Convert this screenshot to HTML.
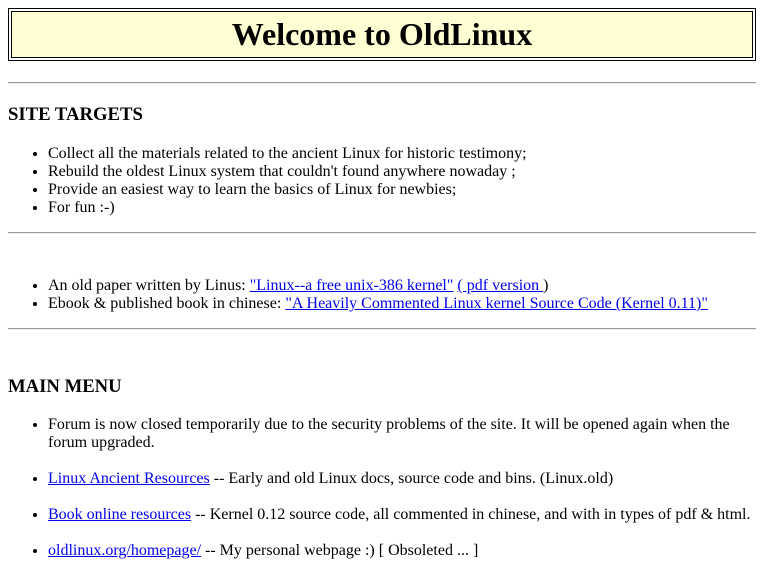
<!DOCTYPE html>
<html><head><style>
body{margin:0;font-family:"Liberation Serif",serif;font-size:16px;color:#000;background:#fff;}
.a{position:absolute;}
.box{left:8px;top:8px;width:748px;height:53px;box-sizing:border-box;border:1px solid #000;padding:2px;}
.box div{width:100%;height:100%;box-sizing:border-box;border:1px solid #000;background:#ffffd3;text-align:center;font-weight:bold;font-size:32px;line-height:45px;}
hr{position:absolute;left:8px;width:748px;margin:0;border:0;border-top:1px solid #999;border-bottom:1px solid #eee;height:0;}
h3{position:absolute;left:8px;margin:0;font-size:18.7px;line-height:22px;}
ul{position:absolute;left:8px;margin:0;padding-left:40px;width:708px;line-height:18px;}
a{color:#00e;}
li{margin:0;}
</style></head><body>
<div class="a box"><div>Welcome to OldLinux</div></div>
<hr style="top:82px">
<h3 style="top:104px">SITE TARGETS</h3>
<ul style="top:145px">
<li>Collect all the materials related to the ancient Linux for historic testimony;</li>
<li>Rebuild the oldest Linux system that couldn't found anywhere nowaday ;</li>
<li>Provide an easiest way to learn the basics of Linux for newbies;</li>
<li>For fun :-)</li>
</ul>
<hr style="top:232px">
<ul style="top:277px">
<li>An old paper written by Linus: <a href="#">"Linux--a free unix-386 kernel"</a> <a href="#">( pdf version </a>)</li>
<li>Ebook &amp; published book in chinese: <a href="#">"A Heavily Commented Linux kernel Source Code (Kernel 0.11)"</a></li>
</ul>
<hr style="top:328px">
<h3 style="top:376px">MAIN MENU</h3>
<ul style="top:416px">
<li style="height:54px">Forum is now closed temporarily due to the security problems of the site. It will be opened again when the forum upgraded.</li>
<li style="height:36px"><a href="#">Linux Ancient Resources</a> -- Early and old Linux docs, source code and bins. (Linux.old)</li>
<li style="height:36px"><a href="#">Book online resources</a> -- Kernel 0.12 source code, all commented in chinese, and with in types of pdf &amp; html.</li>
<li><a href="#">oldlinux.org/homepage/</a> -- My personal webpage :) [ Obsoleted ... ]</li>
</ul>
</body></html>
